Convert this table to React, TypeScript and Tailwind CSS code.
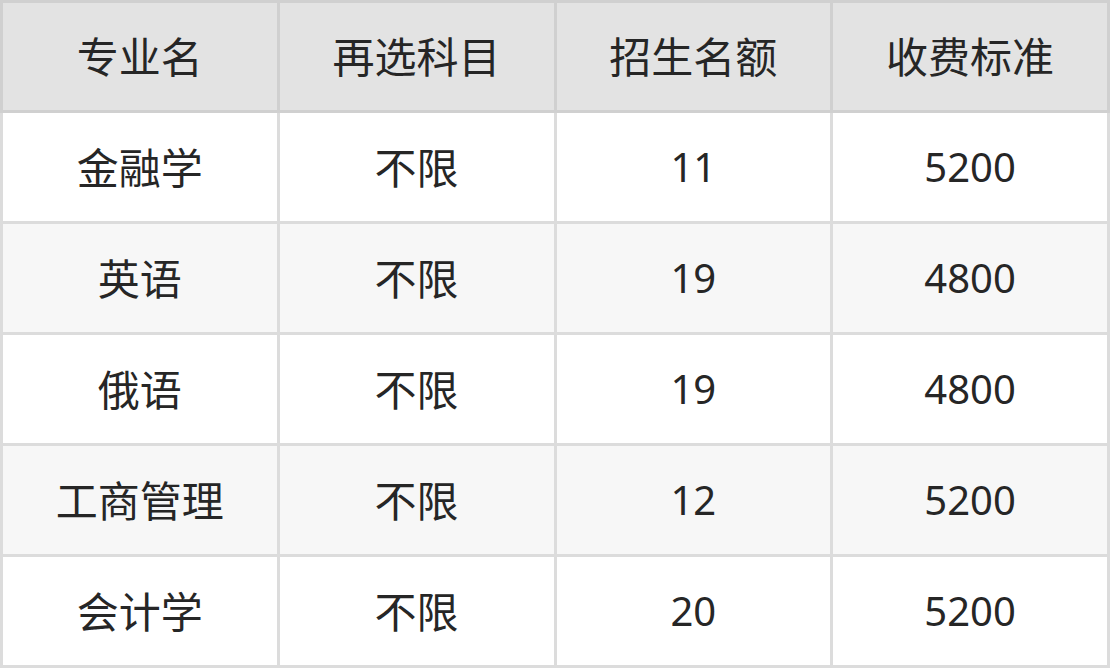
const headers = ['专业名', '再选科目', '招生名额', '收费标准'];

const rows = [
  ['金融学', '不限', '11', '5200'],
  ['英语', '不限', '19', '4800'],
  ['俄语', '不限', '19', '4800'],
  ['工商管理', '不限', '12', '5200'],
  ['会计学', '不限', '20', '5200'],
];

export default function App() {
  return (
    <div
      className="w-[1110px] h-[669px] bg-white text-[#262626]"
      style={{ fontFamily: '"Noto Sans", "Noto Sans CJK SC", sans-serif' }}
    >
      <div className="grid grid-cols-4 gap-[3px] p-[3px] bg-[#d0d0d0]">
        {headers.map((h) => (
          <div key={h} className="h-[107px] bg-[#e3e3e3] flex items-center justify-center text-[42px]">
            {h}
          </div>
        ))}
      </div>
      <div className="grid grid-cols-4 gap-[3px] px-[3px] pb-[3px] bg-[#dcdcdc]">
        {rows.map((row, i) =>
          row.map((cell, j) => (
            <div
              key={`${i}-${j}`}
              className={`h-[108px] flex items-center justify-center ${
                j < 2 ? 'text-[42px]' : 'text-[40px]'
              } ${i % 2 === 1 ? 'bg-[#f7f7f7]' : 'bg-white'}`}
            >
              {cell}
            </div>
          ))
        )}
      </div>
    </div>
  );
}
